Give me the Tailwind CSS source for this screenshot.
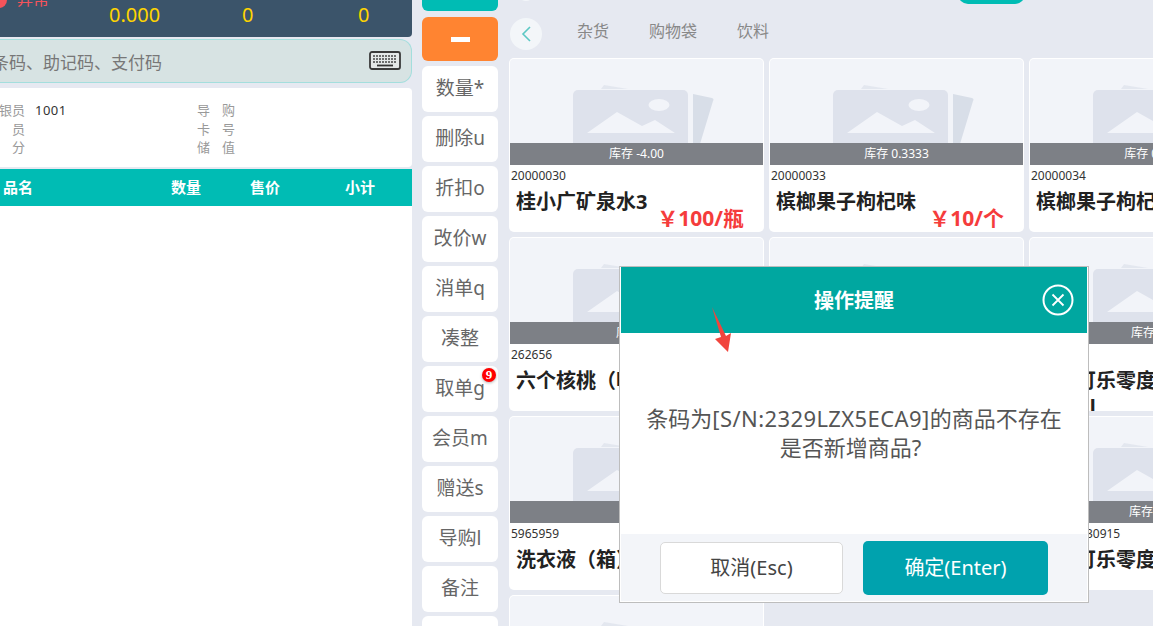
<!DOCTYPE html>
<html lang="zh-CN">
<head>
    <meta charset="UTF-8">
    <meta name="viewport" content="width=device-width, initial-scale=1.0">
    <title>收银台</title>
    <script src="https://cdn.jsdelivr.net/npm/@tailwindcss/browser@4"></script>
</head>
<body class="bg-[#e6e9f1] h-screen overflow-hidden relative font-['Noto_Sans','Noto_Sans_CJK_SC',sans-serif]">
    <div class="flex h-[626px] overflow-hidden">

        <!-- left: totals, search, info, order table -->
        <div class="w-[412px] shrink-0 flex flex-col overflow-hidden">
            <div class="h-[37px] bg-[#3b546a] relative shrink-0 rounded-br-sm">
                <span class="absolute left-[-9px] top-[-8px] w-[16px] h-[16px] rounded-full bg-[#f5535a]"></span>
                <span class="absolute left-[17px] top-[-13px] text-[16px] leading-[24px] text-[#f5535a]">异常</span>
                <span class="absolute left-[109px] top-[1px] text-[20px] leading-[28px] text-[#ffd400]">0.000</span>
                <span class="absolute left-[242px] top-[1px] text-[20px] leading-[28px] text-[#ffd400]">0</span>
                <span class="absolute left-[358px] top-[1px] text-[20px] leading-[28px] text-[#ffd400]">0</span>
            </div>
            <div class="mt-[2px] h-[44px] shrink-0 bg-[#d7e3e3] border border-[#a3dedd] rounded-r-[12px] flex items-center justify-between pr-[10px] border-l-0">
                <span class="text-[17px] text-[#777] -ml-[8px] pt-[3px]">条码、助记码、支付码</span>
                <svg class="w-[32px] h-[19px] mt-[-2px]" viewBox="0 0 32 19">
                    <rect x="1" y="1" width="30" height="17" rx="2" fill="#e4e8e8" stroke="#3a3a3a" stroke-width="1.8"/>
                    <path d="M4 5h24M4 8h24M4 11h24" stroke="#444" stroke-width="1.5" stroke-dasharray="2 1"/>
                    <path d="M8 14.500h16" stroke="#333" stroke-width="1.800"/>
                </svg>
            </div>
            <div class="mt-[5px] h-[79px] shrink-0 bg-white rounded-r-sm flex text-[13px] leading-[18.500px] pt-[13px] -ml-[14px]">
                <div class="w-[211px] shrink-0 flex flex-col">
                    <div class="flex"><span class="w-[39px] text-[#999] flex justify-between"><i class="not-italic">收</i><i class="not-italic">银</i><i class="not-italic">员</i></span><span class="ml-[10px] text-[#333] tracking-[0.500px]">1001</span></div>
                    <div class="w-[39px] text-[#999] flex justify-between"><span>营</span><span>员</span></div>
                    <div class="w-[39px] text-[#999] flex justify-between"><span>积</span><span>分</span></div>
                </div>
                <div class="w-[38px] flex flex-col text-[#999]">
                    <div class="flex justify-between"><span>导</span><span>购</span></div>
                    <div class="flex justify-between"><span>卡</span><span>号</span></div>
                    <div class="flex justify-between"><span>储</span><span>值</span></div>
                </div>
            </div>
            <div class="mt-[2px] h-[37px] shrink-0 bg-[#00bcb4] text-white text-[15px] font-bold flex items-center">
                <span class="ml-[3px] w-[168px]">品名</span>
                <span class="w-[79px]">数量</span>
                <span class="w-[95px]">售价</span>
                <span>小计</span>
            </div>
            <div class="flex-1 bg-white"></div>
        </div>

        <!-- middle: action buttons -->
        <div class="w-[76px] ml-[10px] shrink-0 flex flex-col gap-[4px] text-[19px] text-[#666]">
            <div class="h-[44px] -mt-[33px] bg-[#00bcb4] rounded-md shrink-0"></div>
            <div class="h-[44px] mt-[2px] bg-[#ff8431] rounded-md shrink-0 flex items-center justify-center"><span class="w-[19px] h-[5px] bg-white"></span></div>
            <div class="h-[46px] mt-[1px] bg-white rounded-md shrink-0 flex items-center justify-center pb-[1px]">数量*</div>
            <div class="h-[46px] bg-white rounded-md shrink-0 flex items-center justify-center pb-[1px]">删除u</div>
            <div class="h-[46px] bg-white rounded-md shrink-0 flex items-center justify-center pb-[1px]">折扣o</div>
            <div class="h-[46px] bg-white rounded-md shrink-0 flex items-center justify-center pb-[1px]">改价w</div>
            <div class="h-[46px] bg-white rounded-md shrink-0 flex items-center justify-center pb-[1px]">消单q</div>
            <div class="h-[46px] bg-white rounded-md shrink-0 flex items-center justify-center pb-[1px]">凑整</div>
            <div class="h-[46px] bg-white rounded-md shrink-0 flex items-center justify-center pb-[1px] relative">取单g
                <span class="absolute right-[2px] top-[2px] w-[14px] h-[14px] rounded-full bg-[#f00] text-white text-[13px] leading-[14px] font-bold text-center font-['Liberation_Serif',serif] shadow-[0_1px_3px_rgba(0,0,0,0.3)]">9</span>
            </div>
            <div class="h-[46px] bg-white rounded-md shrink-0 flex items-center justify-center pb-[1px]">会员m</div>
            <div class="h-[46px] bg-white rounded-md shrink-0 flex items-center justify-center pb-[1px]">赠送s</div>
            <div class="h-[46px] bg-white rounded-md shrink-0 flex items-center justify-center pb-[1px]">导购l</div>
            <div class="h-[46px] bg-white rounded-md shrink-0 flex items-center justify-center pb-[1px]">备注</div>
            <div class="h-[46px] bg-white rounded-md shrink-0"></div>
        </div>

        <!-- right: categories and goods -->
        <div class="ml-[11px] flex-1 min-w-0 overflow-hidden relative">
            <div class="absolute left-[449px] top-[-20px] w-[67px] h-[24px] rounded-b-[10px] bg-[#00bcb4]"></div>
            <div class="absolute left-[9px] top-[-15px] w-[16px] h-[16px] rounded-full bg-[#f3f6f9]"></div>
            <div class="h-[58px] flex items-center text-[16px] text-[#888] pt-[10px]">
                <div class="w-[32px] h-[32px] ml-[1px] rounded-full bg-[#f3f6f9] flex items-center justify-center shrink-0">
                    <svg class="w-[12px] h-[18px]" viewBox="0 0 12 18"><path d="M10 2 3 9l7 7" fill="none" stroke="#5cc8c4" stroke-width="1.6"/></svg>
                </div>
                <span class="ml-[35px] -mt-[6px]">杂货</span>
                <span class="ml-[40px] -mt-[6px]">购物袋</span>
                <span class="ml-[40px] -mt-[6px]">饮料</span>
            </div>
            <div id="goods" class="grid grid-cols-[repeat(3,255px)] gap-[5px]"></div>
        </div>
    </div>

    <!-- dialog -->
    <div class="absolute left-[619px] top-[266px] w-[470px] h-[337px] bg-white border border-[#bdbdbd] px-[1px] pb-[1px] flex flex-col">
        <div class="h-[66px] shrink-0 bg-[#00a7a0] relative flex items-center justify-center pt-[1px] text-white text-[20px] font-bold">
            操作提醒
            <svg class="absolute right-[13px] top-[17px] w-[32px] h-[32px]" viewBox="0 0 32 32" fill="none" stroke="#fff">
                <circle cx="16" cy="16" r="14.500" stroke-width="2"/>
                <path d="M10.500 10.500l11 11M21.500 10.500l-11 11" stroke-width="1.800"/>
            </svg>
        </div>
        <div class="flex-1 flex flex-col items-center pt-[71px] text-[22px] leading-[29px] text-[#555]">
            <p>条码为<span class="tracking-[0.400px]">[S/N:2329LZX5ECA9]</span>的商品不存在</p>
            <p class="mr-[7px]">是否新增商品?</p>
        </div>
        <div class="h-[67px] shrink-0 bg-[#f3f5f9] flex items-center pl-[39px] gap-[20px] text-[20px]">
            <button class="w-[183px] h-[52px] bg-white border border-[#d9d9d9] rounded-[5px] text-[#444]">取消(Esc)</button>
            <button class="w-[185px] h-[54px] bg-[#00a2ae] rounded-[5px] text-white">确定(Enter)</button>
        </div>
    </div>

    <!-- red annotation arrow -->
    <svg class="absolute left-[705px] top-[300px] w-[35px] h-[60px]" viewBox="0 0 35 60">
        <polygon points="7,7 16,37 10,39 23,52 26,33 21,36" fill="#f1453d"/>
    </svg>

    <script>
        const goods = [
            ['20000030', '桂小广矿泉水3', '库存 -4.00', '￥100/瓶'],
            ['20000033', '槟榔果子枸杞味', '库存 0.3333', '￥10/个'],
            ['20000034', '槟榔果子枸杞味', '库存 0.3333', ''],
            ['262656', '六个核桃（听）', '库存 12', ''],
            ['6901028', '香烟', '库存 5', ''],
            ['5449000', '可口可乐零度无糖汽水 330ml', '库存 0.00', ''],
            ['5965959', '洗衣液（箱）', '库存 8', ''],
            ['6902083', '矿泉水', '库存 3', ''],
            ['6900000030915', '可口可乐零度', '库存 -1.00', ''],
            ['', '', '', '']
        ];

        const holder = `<svg class="absolute left-0 top-0 w-[253px] h-[85px]" viewBox="0 0 253 85">
            <path d="M91 30l3-4 24 4z" fill="#e3e7ef"/>
            <path d="M183 35l19 4a2 2 0 0 1 1 3l-13 43h-7z" fill="#d8dee8"/>
            <rect x="63" y="31" width="115" height="70" rx="5" fill="#dee2ec"/>
            <path d="M77 74l30-21 25 14 13-6 20 13z" fill="#f2f4f9"/>
            <ellipse cx="149" cy="46" rx="10.500" ry="6" fill="#f2f4f9"/>
        </svg>`;

        document.getElementById('goods').innerHTML = goods.map(g => `
            <div class="h-[174px] bg-white rounded-[5px] p-[1px] overflow-hidden flex flex-col">
                <div class="h-[84px] bg-[#f2f4f9] relative overflow-hidden shrink-0 rounded-t-[4px]">${holder}</div>
                <div class="h-[22px] bg-[#7d8086] text-white text-[12px] leading-[21px] text-center shrink-0">${g[2]}</div>
                <div class="text-[12px] leading-[18px] text-[#333] pl-[1px] pt-[2px] h-[20px] shrink-0">${g[0]}</div>
                <div class="relative flex-1 min-h-0">
                    <div class="px-[6px] pt-[4px] text-[20px] leading-[26px] font-bold text-[#222]">${g[1]}</div>
                    <div class="absolute right-[19px] top-[20px] text-[21px] leading-[26px] font-bold text-[#f53c3c]">${g[3]}</div>
                </div>
            </div>`).join('');
    </script>
</body>
</html>
